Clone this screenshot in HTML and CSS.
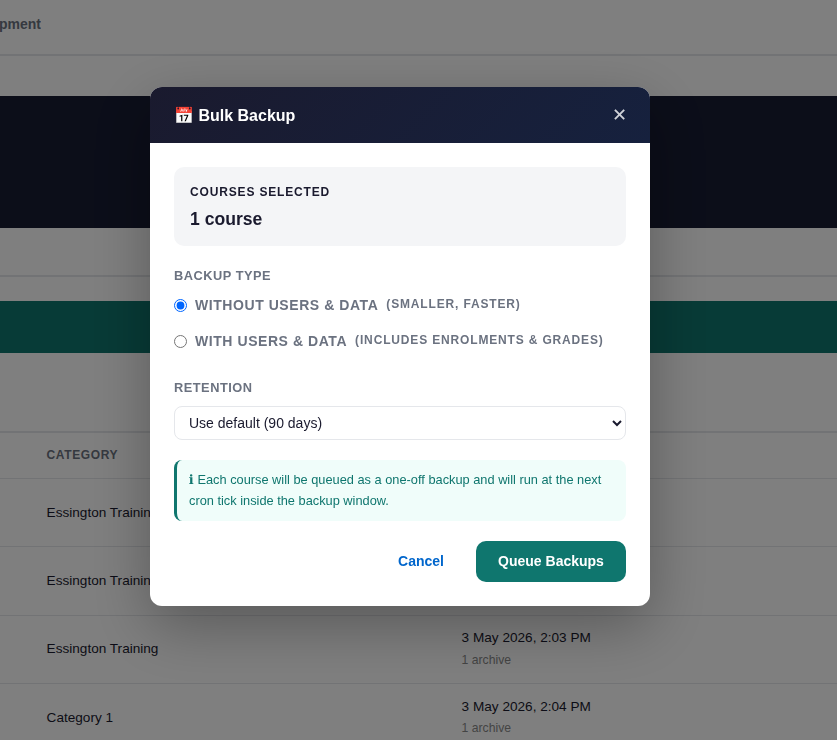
FILE: index.html
```html
<!DOCTYPE html>
<html lang="en">
<head>
<meta charset="utf-8">
<title>Bulk Backup</title>
<link rel="stylesheet" href="styles.css">
</head>
<body>
<div class="page">
  <nav class="tabs"><span class="tab">Development</span></nav>
  <section class="hero"></section>
  <div class="strip"></div>
  <div class="teal-bar"></div>
  <div class="filters"></div>
  <div class="table">
    <div class="row head"><div>CATEGORY</div></div>
    <div class="row r1"><div>Essington Training</div></div>
    <div class="row r2"><div>Essington Training</div></div>
    <div class="row r3"><div>Essington Training</div><div class="when"><div>3 May 2026, 2:03 PM</div><small>1 archive</small></div></div>
    <div class="row r4"><div>Category 1</div><div class="when"><div>3 May 2026, 2:04 PM</div><small>1 archive</small></div></div>
  </div>
</div>
<div class="overlay">
  <div class="modal">
    <header class="modal-head">
      <h2>📅 Bulk Backup</h2>
      <span class="close">✕</span>
    </header>
    <div class="modal-body">
      <div class="summary">
        <div class="summary-label">COURSES SELECTED</div>
        <div class="summary-value">1 course</div>
      </div>
      <div class="field-label">BACKUP TYPE</div>
      <div class="radios">
        <label class="radio"><input type="radio" name="t" checked><span class="radio-main">WITHOUT USERS &amp; DATA</span><span class="radio-note">(SMALLER, FASTER)</span></label>
        <label class="radio"><input type="radio" name="t"><span class="radio-main">WITH USERS &amp; DATA</span><span class="radio-note">(INCLUDES ENROLMENTS &amp; GRADES)</span></label>
      </div>
      <div class="field-label retention">RETENTION</div>
      <select class="select"><option>Use default (90 days)</option></select>
      <div class="info"><span class="info-icon">ℹ</span> Each course will be queued as a one-off backup and will run at the next cron tick inside the backup window.</div>
      <div class="actions">
        <button class="cancel">Cancel</button>
        <button class="queue">Queue Backups</button>
      </div>
    </div>
  </div>
</div>
</body>
</html>
```
FILE: styles.css
```css
* { box-sizing: border-box; }
html, body { margin: 0; height: 100%; overflow: hidden; }
body { font-family: "Liberation Sans", Arial, sans-serif; background: #fff; color: #1a1a2e; }
.page { height: 740px; overflow: hidden; }
.tabs { height: 56px; border-bottom: 2px solid #e5e7eb; display: flex; align-items: center; padding-bottom: 6px; }
.tab { width: 41px; overflow: hidden; display: flex; justify-content: flex-end; white-space: nowrap; font-size: 14px; font-weight: 700; color: #6b7280; }
.hero { height: 132px; margin-top: 40px; background: #181c33; }
.strip { height: 49px; border-bottom: 2px solid #e5e7eb; }
.teal-bar { height: 52px; margin-top: 24px; background: #0f766e; }
.filters { height: 80px; border-bottom: 2px solid #e5e7eb; }
.row { display: grid; grid-template-columns: 415px 1fr; padding-left: 46.6px; align-items: center; font-size: 13.6px; border-bottom: 1px solid #e5e7eb; }
.head { height: 46px; padding-bottom: 2px; font-size: 12px; font-weight: 700; letter-spacing: .6px; color: #6b7280; }
.r1 { height: 68px; padding-bottom: 1px; }
.r2 { height: 69px; padding-bottom: 1px; }
.r3 { height: 68px; padding-bottom: 2px; }
.r4 { height: 68px; padding-bottom: 1px; }
.when small { display: block; margin-top: 7px; font-size: 12.2px; color: #888; }
.r3 .when small { margin-top: 8px; }
.overlay { position: fixed; inset: 0; background: rgba(0,0,0,.5); display: flex; justify-content: flex-start; align-items: flex-start; padding: 87px 0 0 150px; }
.modal { width: 500px; background: #fff; border-radius: 12px; overflow: hidden; box-shadow: 0 20px 60px rgba(0,0,0,.3); }
.modal-head { height: 56px; padding: 0 24px; display: flex; align-items: center; justify-content: space-between; background: linear-gradient(135deg, #1a1a2e, #16213e); color: #fff; }
.modal-head h2 { margin: 0; font-size: 16px; font-weight: 700; }
.close { font-size: 18px; color: #fff; opacity: .8; line-height: 1; margin-right: -.5px; }
.modal-body { padding: 24px; }
.summary { height: 79px; padding: 16px; background: #f4f5f7; border-radius: 10px; }
.summary-label { font-size: 12px; font-weight: 700; letter-spacing: .84px; line-height: 18px; }
.summary-value { margin-top: 7px; font-size: 17.6px; font-weight: 700; line-height: 22px; }
.field-label { margin-top: 21px; font-size: 12.8px; font-weight: 600; letter-spacing: .51px; color: #6b7280; line-height: 18px; }
.radios { padding-top: 2px; }
.retention { margin-top: 20px; }
.radio { display: flex; align-items: center; height: 36px; color: #6b7280; font-weight: 700; }
.radio input { margin: 0 8px 0 0; width: 13px; height: 13px; accent-color: #0066ff; }
.radio-main { font-size: 14px; letter-spacing: .56px; }
.radio-note { margin-left: 8px; font-size: 12px; letter-spacing: .84px; position: relative; top: -1px; }
.select { display: block; width: 100%; height: 34px; margin-top: 9px; padding: 0 10px; font: 14px "Liberation Sans", Arial, sans-serif; color: #1a1a2e; background: #fff; border: 1px solid #e5e7eb; border-radius: 8px; }
.info { margin-top: 20px; padding: 9px 12px; height: 61px; background: #f0fdfa; border-left: 3px solid #0f766e; border-radius: 8px; font-size: 12.8px; line-height: 21px; color: #0f766e; }
.info-icon { font-family: "DejaVu Sans", sans-serif; }
.actions { display: flex; justify-content: flex-end; align-items: center; gap: 10px; margin-top: 20px; }
.actions button { height: 41px; padding-bottom: 2px; border: 0; border-radius: 10px; font: 700 14px "Liberation Sans", Arial, sans-serif; }
.cancel { padding: 0 22px; background: transparent; color: #0066cc; }
.queue { width: 150px; background: #0f766e; color: #fff; }
```
